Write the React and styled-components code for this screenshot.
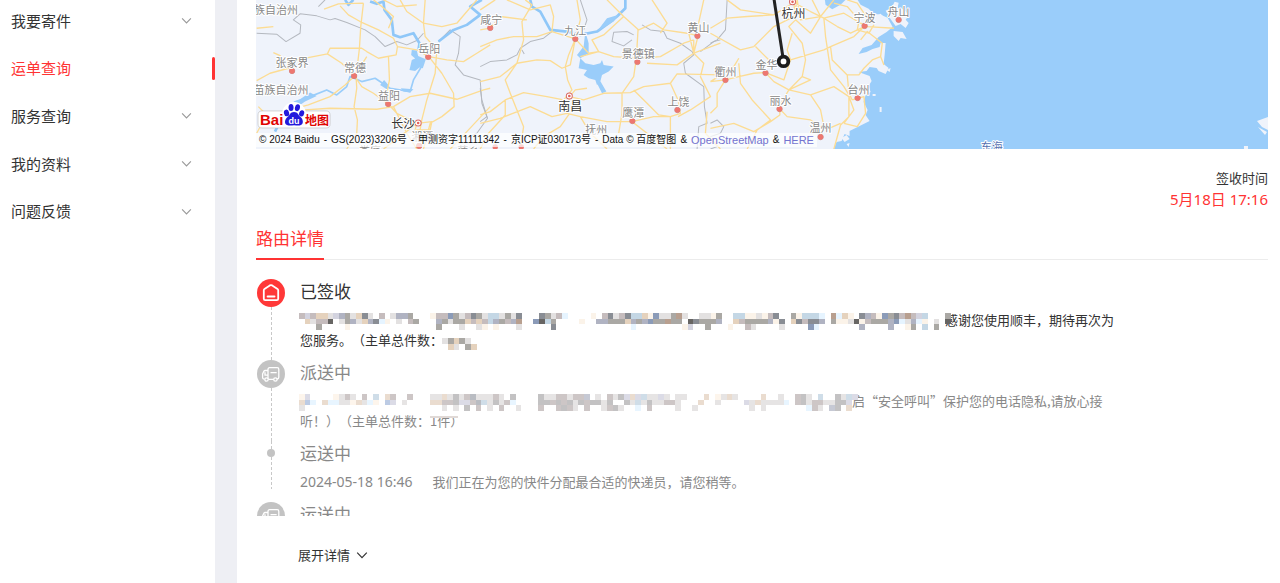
import React from "react";
import styled, { createGlobalStyle, css } from "styled-components";

const GlobalStyle = createGlobalStyle`
  * {
    box-sizing: border-box;
  }

  body {
    margin: 0;
    background-color: #fff;
    color: #333;
    font-family: "Noto Sans", "Noto Sans CJK SC", sans-serif;
    font-size: 13px;
    text-spacing-trim: space-all;
  }
`;

const Page = styled.div`
  display: flex;
  min-height: 100vh;
  background-color: #eeeff4;
`;

const Sidebar = styled.aside`
  flex: 0 0 215px;
  background-color: #fff;
`;

const Menu = styled.nav`
  display: grid;
  grid-template-rows: repeat(5, 1fr);
  height: 238px;
  margin-top: -3px;
`;

const MenuItem = styled.a`
  display: flex;
  align-items: center;
  justify-content: space-between;
  padding: 0 ${({ $active }) => ($active ? "0" : "23px")} 0 11px;
  color: ${({ $active }) => ($active ? "#ff3333" : "#333")};
  font-size: 15px;
  line-height: 24px;
  text-decoration: none;
`;

const ActiveBar = styled.span`
  width: 3px;
  height: 23px;
  border-radius: 2px;
  background-color: #ff3333;
`;

const Main = styled.main`
  flex: 1;
  min-width: 0;
  margin-left: 22px;
  padding: 0 12px 0 19px;
  background-color: #fff;
`;

const MapBox = styled.div`
  position: relative;
  height: 149px;
  overflow: hidden;
  background-color: #9acdfa;
`;

const MapDrawing = styled.svg`
  display: block;
  width: 100%;
  height: 100%;
  font-family: "Noto Sans CJK SC", sans-serif;
`;

const Copyright = styled.div`
  position: absolute;
  left: 0;
  bottom: 2px;
  display: flex;
  gap: 4px;
  padding: 0 3px;
  background-color: rgba(255, 255, 255, 0.7);
  color: #111;
  font-family: "Liberation Sans", "Noto Sans CJK SC", sans-serif;
  font-size: 10px;
  line-height: 14px;
  white-space: nowrap;
`;

const MapLink = styled.a`
  color: #7373cf;
  font-size: 11px;
  text-decoration: none;
`;

const Receipt = styled.div`
  padding-top: 19px;
  text-align: right;
`;

const ReceiptLabel = styled.div`
  line-height: 20px;
`;

const ReceiptTime = styled.div`
  color: #ff3333;
  font-size: 15px;
  line-height: 23px;
`;

const Tabs = styled.div`
  display: flex;
  margin-top: 15px;
  border-bottom: 1px solid #ececec;
`;

const Tab = styled.button`
  height: 34px;
  margin-bottom: -1px;
  padding: 0 0 6px;
  border: none;
  border-bottom: 2px solid #ff3333;
  background-color: transparent;
  color: #ff3333;
  font-family: inherit;
  font-size: 17px;
  line-height: 24px;
  cursor: pointer;
`;

const Timeline = styled.ol`
  height: 237px;
  margin: 19px 0 0;
  padding: 0;
  overflow: hidden;
  list-style: none;
`;

const Step = styled.li`
  display: flex;
  gap: 14px;
  color: ${({ $done }) => ($done ? "#333" : "#888")};
`;

const Rail = styled.div`
  display: flex;
  flex-direction: column;
  align-items: center;
  flex: 0 0 30px;
  ${({ $dot }) =>
    $dot &&
    css`
      padding-bottom: 13px;
    `}
`;

const Dash = styled.span`
  flex: ${({ $short }) => ($short ? "0 0 8px" : "1")};
  width: 1px;
  margin-left: 1px;
  background-image: linear-gradient(#c8c8c8 60%, transparent 60%);
  background-size: 1px 5px;
`;

const Badge = styled.svg`
  flex: none;
  width: 28px;
  height: 28px;
`;

const Dot = styled.span`
  width: 8px;
  height: 8px;
  border-radius: 50%;
  background-color: #c3c3c3;
`;

const StepContent = styled.div`
  flex: 1;
  min-width: 0;
  max-width: 820px;
  padding-bottom: 10px;
`;

const StepTitle = styled.h3`
  margin: 0 0 5px;
  font-size: 17px;
  font-weight: 400;
  line-height: 26px;
`;

const StepText = styled.p`
  margin: 0;
  font-family: "Noto Sans CJK SC", sans-serif;
  line-height: 20px;
`;

const StepTime = styled.time`
  margin-right: 20px;
  font-family: "Noto Sans", sans-serif;
  font-size: 14px;
  line-height: 16px;
`;

const Mosaic = styled.svg`
  position: relative;
  display: inline-block;
  width: ${({ $width }) => $width}px;
  height: ${({ $height }) => $height}px;
  margin-left: -1px;
  overflow: visible;
  vertical-align: -5px;
`;

const Smudge = styled.span`
  position: relative;
  display: inline-block;
  width: 28px;
  height: 4px;
  margin-right: -28px;
  background-image: linear-gradient(#fff 50%, #e0d9d6 50%);
  vertical-align: 8px;
`;

const ExpandButton = styled.button`
  display: flex;
  align-items: center;
  gap: 6px;
  margin: 28px 0 0 42px;
  padding: 0;
  border: none;
  background-color: transparent;
  color: #333;
  font-family: inherit;
  font-size: 13px;
  line-height: 22px;
  cursor: pointer;
`;

const menu = [
  { label: "我要寄件" },
  { label: "运单查询", active: true },
  { label: "服务查询" },
  { label: "我的资料" },
  { label: "问题反馈" },
];

const credits = [
  "© 2024 Baidu",
  "-",
  "GS(2023)3206号",
  "-",
  "甲测资字11111342",
  "-",
  "京ICP证030173号",
  "-",
  "Data © 百度智图",
  "&",
];

const shades = {
  a: "#c5bcbd",
  b: "#d3d3df",
  c: "#e5d2bd",
  d: "#898d94",
  e: "#b0b3c2",
  f: "#fbf3e9",
  g: "#aaa8a4",
  h: "#c4d7e5",
  i: "#676563",
  j: "#b89f8f",
  k: "#8b9bb8",
  l: "#e3e1e1",
  m: "#e6f4ff",
};

const paleShades = {
  a: "#cdc6c6",
  b: "#dbdbe6",
  c: "#eadccf",
  d: "#b9bcc2",
  e: "#c6c9d4",
  f: "#fdf5ec",
  g: "#c3c2c3",
  h: "#cfdde8",
  k: "#bccbe4",
  l: "#e6e4e4",
  m: "#e8f5ff",
};

// each run is [row, first column, shades]
const deliveredRuns = [
  [0, 0, "abacclbeglcdl.a.leeg"],
  [0, 23, "faakgladglhhlgld"],
  [0, 42, "dgla"],
  [0, 46, "m....f.adladhhcfkllgjl"],
  [0, 70, "llfg"],
  [0, 76, "hhfflfad"],
  [0, 86, "gfhhhm"],
  [0, 93, "jmcf.deafkgdajabh"],
  [0, 113, "g"],
  [1, 1, "claai.lgelcedmf.l.ag"],
  [1, 24, "eglggcacahegaej"],
  [1, 41, "kihg"],
  [1, 49, "f"],
  [1, 52, "eegggcegekggjgg.idggge"],
  [1, 76, "caggggefd"],
  [1, 86, "cdadde"],
  [1, 93, "gfflifagggekmlemf.l.i"],
  [2, 3, "g....f"],
  [2, 24, "g...l..lf.f...l.....d"],
  [2, 58, "m"],
  [2, 67, "fb..g...f..al....l"],
  [2, 89, "km.......e....e..fg.h.g"],
];

const countRuns = [
  [0, 0, "lgcgl"],
  [1, 1, "cl.gc"],
];

const deliveringRuns = [
  [0, 0, "fb....flal.a.h.ca..a"],
  [0, 23, "llclgladlllal.g"],
  [0, 42, "gllaalaae.l.alg"],
  [0, 57, "bcbhllbl.ll...c.flcl"],
  [0, 81, "c..l..agl.h..glhb"],
  [1, 0, "ckm.cmmllfclmf.kb.l"],
  [1, 23, "ccaagbbadhlglam"],
  [1, 42, "ggagaglgagglg"],
  [1, 57, "glhlgllaal"],
  [1, 70, "c..l....blcllllm.aglaallggb"],
  [2, 0, "l"],
  [2, 25, "l.l.g.a.l.a..l"],
  [2, 42, "a..agal.a..lagl..m.a....l..l"],
  [2, 79, "l.l.......mal.eg.c"],
];

const cities = [
  ["族自治州", 276, 14],
  ["张家界", 292, 67, 292, 71],
  ["苗族自治州", 281, 94],
  ["常德", 355, 72, 354, 76],
  ["岳阳", 429, 53, 428, 57],
  ["益阳", 389, 100, 388, 104],
  ["咸宁", 491, 24, 490, 28],
  ["九江", 575, 35, 575, 39],
  ["景德镇", 638, 58, 637, 62],
  ["黄山", 698, 32, 697, 36],
  ["上饶", 678, 106, 677, 110],
  ["鹰潭", 633, 117, 632, 121],
  ["抚州", 596, 134],
  ["衢州", 725, 76, 725, 80],
  ["金华", 766, 69, 765, 73],
  ["丽水", 780, 105, 779, 109],
  ["温州", 820, 132, 820, 137],
  ["台州", 858, 94, 857, 98],
  ["宁波", 864, 22, 864, 26],
  ["舟山", 898, 16, 898, 20],
  ["湘潭", 422, 141, 419, 146],
  ["娄底", 370, 155],
  ["萍乡", 468, 155],
];

const capitals = [
  ["南昌", 570, 111, 569, 96],
  ["长沙", 403, 128, 418, 123],
  ["杭州", 793, 18, 792, 2],
];

const sheets = [
  {
    x: 250,
    roads:
      "M222 28L265 12 340 10M270 18L295 45 330 65 385 90 430 115 442 140 438 165 400 172 385 175 350 155 335 145 240 145 232 162 140 180 115 205 60 220 20 242M70 158L92 168M340 10L332 80 328 145 318 230 320 265 312 320 322 360 320 400 290 447M232 162L275 190 313 228 350 170M313 228L285 255 240 290 175 315 120 330M313 228L335 260 370 280 415 313 440 340 500 370M130 332L240 325 380 328 430 320 480 290 540 280 620 298 700 270 720 265M415 170L418 240 410 280 415 313M442 140L500 150 536 170 590 180 640 185 680 160 720 135M370 0L395 20 430 50 415 85M450 0L470 35 520 70 575 80 620 70 680 0M525 0L520 70 525 110 560 150 555 220 530 300 515 360 500 447M536 170L575 220 610 280 612 320 575 350 540 370 520 447M400 0L440 20 500 15M500 370L545 365 540 390 495 390ZM500 370L450 410 400 447M20 85L70 80M20 400L50 345 25 320M600 447L650 395 720 320M500 447L470 400 430 320",
    borders:
      "M20 100L80 103 108 125 150 100 152 75 130 60 150 42 200 48 240 60 255 56 290 68 345 90 375 110 405 140 440 125 470 135 500 122 520 100M565 125L600 90 630 110 625 160 615 195 640 225 690 240 695 310 712 355 680 400 650 415M205 20L225 0",
    rivers:
      "M285 0L295 15 310 0M360 5L380 12 400 5 403 30 425 60 430 105 450 112 490 100 508 130 505 150M565 125L610 90 650 75 690 45 660 20 695 0M75 395L85 375",
    streams:
      "M140 305L180 290 230 270 260 285 290 260 300 230 335 245 375 235 420 265 480 275 490 240 520 190",
    lakes:
      "M485 150L500 152 504 168 527 178 518 205 508 203 495 213 478 210 485 180 495 176 483 165ZM130 305L150 298 180 278 200 288 165 305 150 315ZM390 255L402 240 415 255 410 268ZM452 265L490 268 480 278 460 275Z",
  },
  {
    x: 480,
    roads:
      "M0 30L45 0M0 140L50 120 100 110 170 110 215 95 285 117 300 60 290 0M135 0L155 15 125 65 130 120 110 190 75 240 90 280 130 380 120 447M0 245L60 230 110 190 170 180 210 182 245 205 270 195 285 117M80 0L150 30 210 15 220 50 215 95M0 90L30 85 60 50 140 60M285 117L265 165 255 200 262 240 275 270 250 300 200 290 130 278 75 300 30 335 0 345M285 117L325 160 355 155 400 170 473 175 540 170 610 130 640 120M300 170L355 155 335 120 370 105 430 50 475 90 520 70 550 90 620 100 653 108M380 0L430 50M653 108L640 160 590 195 500 190M473 90L468 175 460 230 425 280 425 340 415 400M268 290L310 300 370 280 450 278 490 260 570 250 590 222 720 225M268 290L260 340 215 350 150 320 60 355 0 370M260 340L300 350 380 365 455 365 520 350 570 350 570 447M268 340L240 380 190 410 160 447M300 350L330 400 380 447M320 265L285 270 268 290M460 270L500 310 535 345 570 350 600 340 593 300 570 250M515 0L560 70 540 100M625 100L640 160 670 190 660 230 690 290 630 330 593 350M640 120L640 160 720 130M680 335L675 400 720 447M670 0L650 90M75 300L75 345 25 400 0 447M455 365L500 400 560 447",
    borders:
      "M0 200L30 185 80 180 110 165 120 145 150 125 190 115 215 95M125 150L132 162M300 0L320 60 310 90M460 105L440 95 400 97 395 125 430 138 455 120M485 75L510 90 550 95 560 115 600 130 635 155 640 165 610 190 615 220 670 260 672 320 680 370 655 380 650 447M660 155L700 125 720 120M0 265L5 300 20 350 0 365",
    rivers:
      "M150 0L155 20 180 35 210 90 260 95 300 105 350 95 385 70 410 50 435 25 435 0",
    streams: "",
    lakes:
      "M315 95L325 130 325 160 300 175 290 165 310 140ZM300 175L315 190 340 195 360 190 365 180 370 195 400 200 385 215 365 225 360 245 350 255 345 240 325 235 310 225 320 210 295 205ZM355 235L378 275 365 280 350 250ZM380 55L415 45 400 65 350 95Z",
  },
  {
    x: 710,
    roads:
      "M0 85L50 55 110 50 190 45 250 8 300 35 340 55 400 40 450 70 470 80 550 85M50 0L90 30 190 45M130 140L190 80 250 50 260 0M130 140L90 150 0 100M135 140L180 185 240 180 340 150 360 140 430 110 461 80M250 8L255 60 235 80 275 130 285 180 275 230 235 270 200 330M340 55L345 110 360 210 400 260 415 285 415 350 390 375 370 447M260 0L270 60 330 50 370 0M245 100L230 150 240 180 220 240 165 218 130 220 85 230 45 240 0 245M85 175L70 200 0 245M45 240L20 280 20 320 0 340M85 190L90 250 125 300 180 360 140 390 110 447M165 218L190 245 235 270 300 285 370 260 415 290 430 330 400 370M235 270L300 240 275 230M300 285L330 330 340 380 330 410M208 327L230 350 300 360 345 390 390 370M0 385L70 370 130 395 180 365M180 365L208 345 208 327M360 140L365 180 410 225 445 225 460 205 485 180 510 170 515 130 470 95 450 120M461 80L420 100 380 80 340 55M410 0L440 10 480 70M410 225L415 280 425 300M425 300L460 290 465 340 440 380 400 370M445 65L440 90 475 100 490 75M370 10L410 20 445 60M510 170L520 195M305 0L330 50 300 100 255 60",
    borders:
      "M50 0L45 90 20 120 0 130M0 370L20 360 40 380 30 400 0 410M0 447L20 440",
    rivers: "",
    streams: "",
    lakes: "M343 0L345 15 365 28 390 15 405 0Z",
  },
];

const cells = (runs) =>
  runs.flatMap(([row, start, text]) =>
    [...text]
      .map((shade, i) => ({ shade, row, col: start + i }))
      .filter(({ shade }) => shade !== ".")
  );

const Pixels = ({
  runs,
  width,
  height = 17,
  columns,
  rows = 3,
  colors = shades,
}) => (
  <Mosaic
    $width={width}
    $height={height}
    viewBox={`0 0 ${columns} ${rows}`}
    preserveAspectRatio="none"
    shapeRendering="crispEdges"
    aria-hidden="true"
  >
    {cells(runs).map(({ shade, row, col }) => (
      <rect
        key={`${row}-${col}`}
        x={col}
        y={row}
        width="1"
        height="1"
        fill={colors[shade]}
      />
    ))}
  </Mosaic>
);

const Chevron = ({ size, color }) => (
  <svg
    width={size}
    height={size}
    viewBox="0 0 12 12"
    fill="none"
    stroke={color}
    strokeWidth="1.2"
    aria-hidden="true"
  >
    <path d="M1.2 3.6 6 8.6l4.8-5" />
  </svg>
);

const HouseBadge = () => (
  <Badge viewBox="0 0 28 28" fill="none" aria-hidden="true">
    <circle cx="14" cy="14" r="14" fill="#ff3838" />
    <path
      d="M6.8 11.2c0-.6.3-1 .7-1.3l5.300-3.500c.7-.4 1.700-.4 2.400 0l5.300 3.500c.4.3.7.7.7 1.300v8.500c0 .9-.6 1.500-1.400 1.500H8.200c-.8 0-1.400-.6-1.400-1.500z"
      stroke="#fff"
      strokeWidth="1.8"
    />
    <path d="M10.6 17.5h6.9" stroke="#fff" strokeWidth="1.9" strokeLinecap="round" />
  </Badge>
);

const TruckBadge = () => (
  <Badge viewBox="0 0 28 28" fill="none" aria-hidden="true">
    <circle cx="14" cy="14" r="14" fill="#c3c3c3" />
    <g stroke="#fff" strokeWidth="1.3" strokeLinecap="round" strokeLinejoin="round">
      <path d="M11 19V9.4c0-1 .6-1.7 1.6-1.7h7.6c1 0 1.6.7 1.6 1.7v7.9c0 1-.5 1.7-1.6 1.7M11 10.5H8.2c-.7 0-1.2.4-1.5 1L5.6 14v3.5c0 .9.5 1.5 1.3 1.5M12 19.4h4.3M8 12.7v2.5h2.4M14 12.7h5.2" />
      <circle cx="9.5" cy="19.5" r="1.7" fill="#c3c3c3" />
      <circle cx="18.4" cy="19.5" r="1.7" fill="#c3c3c3" />
    </g>
  </Badge>
);

const BaiduLogo = () => (
  <g>
    <rect x="258" y="111" width="72" height="17" rx="4" fill="#fff" stroke="#bbb" strokeWidth=".6" />
    <path
      d="M294 102c7 0 12 6 12 12v11c-5 3-19 3-24 0v-11c0-6 5-12 12-12"
      fill="#fff"
    />
    <g
      fontFamily="Liberation Sans, sans-serif"
      fontWeight="700"
      fill="#e10602"
    >
      <text x="260" y="125" fontSize="15">
        Bai
      </text>
      <text x="305" y="125" fontSize="12" fontFamily="Noto Sans CJK SC, sans-serif">
        地图
      </text>
    </g>
    <g fill="#2319dc">
      <ellipse cx="286.5" cy="113" rx="2.6" ry="3.4" transform="rotate(-12 286.5 113)" />
      <ellipse cx="291" cy="107.5" rx="2.5" ry="3.5" />
      <ellipse cx="297.4" cy="107.7" rx="2.5" ry="3.5" transform="rotate(12 297.4 107.7)" />
      <ellipse cx="301.6" cy="113.4" rx="2.5" ry="3.2" transform="rotate(15 301.6 113.4)" />
      <path d="M294 112c4 0 4 3 6.5 5 3 2.500 3.500 8-1 8.500-2 .3-3.500-.3-5.500-.3s-3.500.6-5.500.3c-5-.8-4-6-1-8.500 2.500-2 2.500-5 6.500-5" />
    </g>
    <text
      x="294"
      y="124"
      fill="#fff"
      fontFamily="Liberation Sans, sans-serif"
      fontSize="9"
      fontWeight="700"
      textAnchor="middle"
    >
      du
    </text>
  </g>
);

const RouteMap = () => (
  <MapBox>
    <MapDrawing viewBox="256 0 1011 149" preserveAspectRatio="xMinYMax slice">
      <path
        d="M256 0H857L860 5 868 9 873 14 880 15 887 18 892 27 886 32 878 37 871 45 862 48 858 54 866 52 872 49 879 47 880 43 885 43 884 55 883 64 888 68 885 74 878 71 876 68 869 67 866 71 858 72 869 76 871 81 868 86 870 92 865 95 863 102 867 110 865 115 869 121 863 124 855 128 849 131 849 136 844 134 841 141 836 142 833 149H256Z"
        fill="#eff3fb"
      />
      <path
        d="M885 11l6-3 3-6 4 1-1 5 7 2 4 6-3 4 3 3-3 5-5-4-5 2-6-8zM893 31l9 1 4 7-6-1-2 3-5-5zM875 16l5-2 3 3-5 1zM886 70l4-2-1 4zM872 94h3v2h-3zM879 107h2v5h-2zM841 138l5-3 3 4-5 3zM848 119l-2 5 4-2zM1256 121l11-4v13l-6-3zM1257 127l9 5-2 3zM1243 146h4v3h-4zM846 144l3-1-1 4z"
        fill="#eff3fb"
      />
      {sheets.map(({ x, roads, borders, rivers, streams, lakes }) => (
        <g
          key={x}
          transform={`translate(${x} 0) scale(0.3333)`}
          fill="none"
          strokeLinejoin="round"
        >
          <path d={borders} stroke="#b4b8bf" strokeWidth="3" />
          <path d={rivers} stroke="#8fc7f8" strokeWidth="8" />
          <path d={streams} stroke="#9acdfa" strokeWidth="5" />
          <path d={lakes} fill="#9acdfa" />
          <path d={roads} stroke="#fcdc93" strokeWidth="4" />
        </g>
      ))}
      <g
        fontSize="11"
        textAnchor="middle"
        fill="#878787"
        stroke="#fff"
        strokeWidth="2"
        strokeLinejoin="round"
        paintOrder="stroke"
      >
        {cities.map(([name, x, y, cx, cy]) => (
          <g key={name}>
            {cx && (
              <circle cx={cx} cy={cy} r="2.7" fill="#ed7770" stroke="#b56b69" strokeWidth=".7" />
            )}
            <text x={x} y={y}>
              {name}
            </text>
          </g>
        ))}
        <text x="991" y="151" fill="#5470b0">
          东海
        </text>
      </g>
      {capitals.map(([name, x, y, cx, cy]) => (
        <g key={name}>
          <circle cx={cx} cy={cy} r="3" fill="#fff" stroke="#d96a66" />
          <circle cx={cx} cy={cy} r="1.3" fill="#e2615c" />
          <text
            x={x}
            y={y}
            fontSize="12"
            textAnchor="middle"
            fill="#333"
            stroke="#fff"
            strokeWidth="2"
            paintOrder="stroke"
          >
            {name}
          </text>
        </g>
      ))}
      <g fill="#ed7770">
        <circle cx="495" cy="147" r="2.7" />
        <circle cx="521" cy="147" r="2.7" />
      </g>
      <path d="M773-4L783 61" stroke="#222" strokeWidth="3" />
      <circle cx="783" cy="61.5" r="4.8" fill="#fff" stroke="#1c1c1c" strokeWidth="3.8" />
      <BaiduLogo />
    </MapDrawing>
    <Copyright>
      {credits.map((text, i) => (
        <span key={i}>{text}</span>
      ))}
      <MapLink href="#osm">OpenStreetMap</MapLink>
      <span>&amp;</span>
      <MapLink href="#here">HERE</MapLink>
    </Copyright>
  </MapBox>
);

const App = () => {
  return (
    <>
      <GlobalStyle />
      <Page lang="zh-CN">
        <Sidebar>
          <Menu>
            {menu.map(({ label, active }) => (
              <MenuItem key={label} href="#menu" $active={active}>
                {label}
                {active ? <ActiveBar /> : <Chevron size={11} color="#999" />}
              </MenuItem>
            ))}
          </Menu>
        </Sidebar>
        <Main>
          <RouteMap />
          <Receipt>
            <ReceiptLabel>签收时间</ReceiptLabel>
            <ReceiptTime>5月18日 17:16</ReceiptTime>
          </Receipt>
          <Tabs>
            <Tab type="button">路由详情</Tab>
          </Tabs>
          <Timeline>
            <Step $done>
              <Rail>
                <HouseBadge />
                <Dash />
              </Rail>
              <StepContent>
                <StepTitle>已签收</StepTitle>
                <StepText>
                  <Pixels runs={deliveredRuns} width={646} columns={113} />
                  感谢您使用顺丰，期待再次为您服务。（主单总件数：
                  <Pixels
                    runs={countRuns}
                    width={29}
                    height={12}
                    columns={5}
                    rows={2}
                  />
                </StepText>
              </StepContent>
            </Step>
            <Step>
              <Rail>
                <TruckBadge />
                <Dash />
              </Rail>
              <StepContent>
                <StepTitle>派送中</StepTitle>
                <StepText>
                  <Pixels
                    runs={deliveringRuns}
                    width={553}
                    columns={97}
                    colors={paleShades}
                  />
                  启“安全呼叫”保护您的电话隐私,请放心接听！）（主单总件数：
                  <Smudge />
                  1件）
                </StepText>
              </StepContent>
            </Step>
            <Step>
              <Rail $dot>
                <Dash $short />
                <Dot />
                <Dash />
              </Rail>
              <StepContent>
                <StepTitle>运送中</StepTitle>
                <StepText>
                  <StepTime>2024-05-18 16:46</StepTime>
                  我们正在为您的快件分配最合适的快递员，请您稍等。
                </StepText>
              </StepContent>
            </Step>
            <Step>
              <Rail>
                <TruckBadge />
              </Rail>
              <StepContent>
                <StepTitle>运送中</StepTitle>
              </StepContent>
            </Step>
          </Timeline>
          <ExpandButton type="button">
            展开详情
            <Chevron size={12} color="#333" />
          </ExpandButton>
        </Main>
      </Page>
    </>
  );
};

export default App;
